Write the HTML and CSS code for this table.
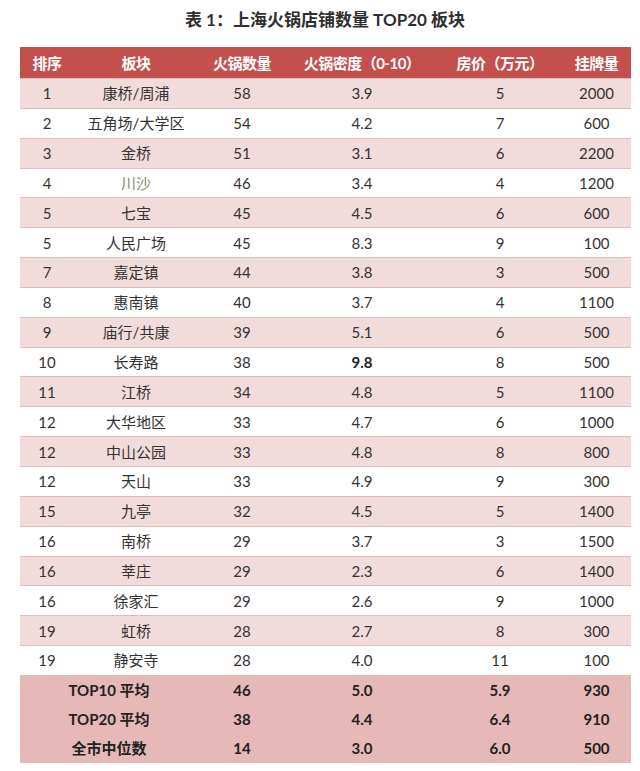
FILE: index.html
```html
<!DOCTYPE html>
<html lang="zh-CN">
<head>
<meta charset="utf-8">
<title>上海火锅店铺数量 TOP20 板块</title>
<link rel="stylesheet" href="styles.css">
</head>
<body>
<h1 class="title">表 1：上海火锅店铺数量 TOP20 板块</h1>
<table class="data">
  <colgroup>
    <col class="c1"><col class="c2"><col class="c3"><col class="c4"><col class="c5"><col class="c6">
  </colgroup>
  <thead>
    <tr><th>排序</th><th>板块</th><th>火锅数量</th><th>火锅密度（0-10）</th><th>房价（万元）</th><th>挂牌量</th></tr>
  </thead>
  <tbody>
    <tr class="pink"><td>1</td><td>康桥/周浦</td><td>58</td><td>3.9</td><td>5</td><td>2000</td></tr>
    <tr><td>2</td><td>五角场/大学区</td><td>54</td><td>4.2</td><td>7</td><td>600</td></tr>
    <tr class="pink"><td>3</td><td>金桥</td><td>51</td><td>3.1</td><td>6</td><td>2200</td></tr>
    <tr><td>4</td><td class="green">川沙</td><td>46</td><td>3.4</td><td>4</td><td>1200</td></tr>
    <tr class="pink"><td>5</td><td>七宝</td><td>45</td><td>4.5</td><td>6</td><td>600</td></tr>
    <tr><td>5</td><td>人民广场</td><td>45</td><td>8.3</td><td>9</td><td>100</td></tr>
    <tr class="pink"><td>7</td><td>嘉定镇</td><td>44</td><td>3.8</td><td>3</td><td>500</td></tr>
    <tr><td>8</td><td>惠南镇</td><td>40</td><td>3.7</td><td>4</td><td>1100</td></tr>
    <tr class="pink"><td>9</td><td>庙行/共康</td><td>39</td><td>5.1</td><td>6</td><td>500</td></tr>
    <tr><td>10</td><td>长寿路</td><td>38</td><td class="b">9.8</td><td>8</td><td>500</td></tr>
    <tr class="pink"><td>11</td><td>江桥</td><td>34</td><td>4.8</td><td>5</td><td>1100</td></tr>
    <tr><td>12</td><td>大华地区</td><td>33</td><td>4.7</td><td>6</td><td>1000</td></tr>
    <tr class="pink"><td>12</td><td>中山公园</td><td>33</td><td>4.8</td><td>8</td><td>800</td></tr>
    <tr><td>12</td><td>天山</td><td>33</td><td>4.9</td><td>9</td><td>300</td></tr>
    <tr class="pink"><td>15</td><td>九亭</td><td>32</td><td>4.5</td><td>5</td><td>1400</td></tr>
    <tr><td>16</td><td>南桥</td><td>29</td><td>3.7</td><td>3</td><td>1500</td></tr>
    <tr class="pink"><td>16</td><td>莘庄</td><td>29</td><td>2.3</td><td>6</td><td>1400</td></tr>
    <tr><td>16</td><td>徐家汇</td><td>29</td><td>2.6</td><td>9</td><td>1000</td></tr>
    <tr class="pink"><td>19</td><td>虹桥</td><td>28</td><td>2.7</td><td>8</td><td>300</td></tr>
    <tr><td>19</td><td>静安寺</td><td>28</td><td>4.0</td><td>11</td><td>100</td></tr>
  </tbody>
  <tfoot>
    <tr><td colspan="2">TOP10 平均</td><td>46</td><td>5.0</td><td>5.9</td><td>930</td></tr>
    <tr><td colspan="2">TOP20 平均</td><td>38</td><td>4.4</td><td>6.4</td><td>910</td></tr>
    <tr><td colspan="2">全市中位数</td><td>14</td><td>3.0</td><td>6.0</td><td>500</td></tr>
  </tfoot>
</table>
</body>
</html>
```

FILE: styles.css
```css
html, body {
  margin: 0;
  padding: 0;
  background: #ffffff;
}
body {
  font-family: "Lato", "Noto Sans CJK SC", sans-serif;
  color: #333333;
  width: 640px;
}
.title {
  margin: 0;
  padding: 9px 0 0 10px;
  height: 38px;
  box-sizing: border-box;
  font-size: 17px;
  line-height: 22px;
  font-weight: bold;
  text-align: center;
  color: #2f2f2f;
}
.data {
  margin-left: 20px;
  margin-top: 9px;
  width: 611px;
  border-collapse: collapse;
  table-layout: fixed;
  font-size: 15px;
}
.c1 { width: 54px; }
.c2 { width: 124px; }
.c3 { width: 88px; }
.c4 { width: 152px; }
.c5 { width: 124px; }
.c6 { width: 69px; }
.data th {
  background: #c4504e;
  color: #ffffff;
  font-weight: bold;
  height: 31px;
  padding: 0;
  font-size: 15px;
  line-height: 18px;
  text-align: center;
  letter-spacing: -0.5px;
}
.data td {
  padding: 0;
  text-align: center;
  height: 28.85px;
  line-height: 18px;
}
.data tbody tr.pink td {
  background: #f2dcdb;
  border-top: 1px solid #e2bcbb;
  border-bottom: 1px solid #e2bcbb;
}
.data td.green {
  color: #7d8c6c;
}
.data td.b {
  font-weight: bold;
  color: #222222;
}
.data tfoot td {
  background: #e6b8b7;
  font-weight: bold;
  color: #222222;
  height: 29.4px;
}
```
